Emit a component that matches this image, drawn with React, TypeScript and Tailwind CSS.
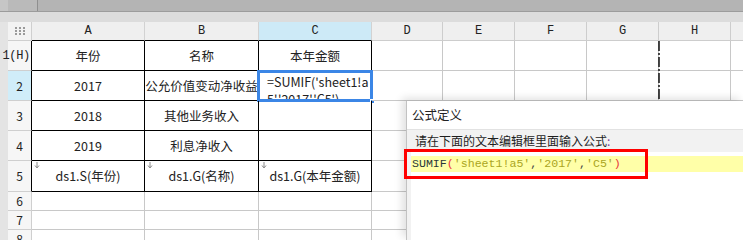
import React from "react";

const cols = ["A", "B", "C", "D", "E", "F", "G", "H", ""];

const rows: { label: string; h: string; cells: string[] }[] = [
  { label: "1(H)", h: "h-[30px]", cells: ["年份", "名称", "本年金额"] },
  { label: "2", h: "h-[30px]", cells: ["2017", "公允价值变动净收益", ""] },
  { label: "3", h: "h-[30px]", cells: ["2018", "其他业务收入", ""] },
  { label: "4", h: "h-[30px]", cells: ["2019", "利息净收入", ""] },
  { label: "5", h: "h-[31px]", cells: ["ds1.S(年份)", "ds1.G(名称)", "ds1.G(本年金额)"] },
  { label: "6", h: "h-[19px]", cells: [] },
  { label: "7", h: "h-[19px]", cells: [] },
  { label: "8", h: "h-[19px]", cells: [] },
];

const colWidths = ["w-[113px]", "w-[114px]", "w-[113px]", "w-[71px]", "w-[72px]", "w-[72px]", "w-[72px]", "w-[72px]", "w-[72px]"];

function DownMark() {
  return (
    <svg className="absolute left-[2px] top-[1px]" width="6" height="7" viewBox="0 0 6 7">
      <path d="M3 0v5M1 3.5L3 6 5 3.5" stroke="#8a8a8a" strokeWidth="1" fill="none" />
    </svg>
  );
}

function CornerIcon() {
  return (
    <svg width="10" height="8" viewBox="0 0 10 8">
      {[0, 1, 2].map((r) =>
        [0, 1, 2].map((c) => <rect key={`${r}${c}`} x={c * 4} y={r * 3} width="2" height="2" fill="#9a9a9a" />)
      )}
    </svg>
  );
}

export default function App() {
  return (
    <div className="relative w-[743px] h-[240px] overflow-hidden bg-white font-['Noto_Sans_CJK_SC',sans-serif] text-[#222]">
      {/* top bars */}
      <div className="flex h-[11px] bg-[#b4b4b4]">
        <div className="w-[8px] bg-[#c6c6c6]" />
        <div className="w-[30px] bg-[#bababa] border-r border-[#8f8f8f]" />
      </div>
      <div className="h-px bg-[#9c9c9c]" />
      <div className="h-[10px] bg-[#dcdcdc]" />

      <div className="flex">
        <div className="w-[8px] shrink-0 bg-[#e4e4e4] self-stretch" />
        <div className="flex flex-col shrink-0">
          {/* column header */}
          <div className="flex h-[19px]">
            <div className="w-[24px] shrink-0 flex items-center justify-center bg-[#f3f3f3] border-r border-b border-[#cfcfcf]">
              <CornerIcon />
            </div>
            {cols.map((c, i) => (
              <div
                key={i}
                className={`${colWidths[i]} shrink-0 flex items-center justify-center font-['Liberation_Mono',monospace] text-[12px] border-r border-b ${
                  i === 2 ? "bg-[#cdeaf7]" : "bg-[#efefef]"
                } ${i < 3 ? "border-r-[#d2d2d2] border-b-black" : "border-[#cdcdcd]"}`}
              >
                {c}
              </div>
            ))}
          </div>

          {rows.map((r, ri) => (
            <div key={ri} className={`flex ${r.h}`}>
              <div
                className={`w-[24px] shrink-0 flex items-center border-r border-b whitespace-nowrap ${
                  ri < 5 ? "border-r-black border-b-[#cfcfcf]" : "border-[#cfcfcf]"
                } ${ri === 1 ? "bg-[#d0edf9]" : "bg-[#f6f6f6]"} ${
                  ri === 0
                    ? "justify-end pr-[1px] font-['Liberation_Mono',monospace] text-[12px] tracking-[-0.3px]"
                    : "justify-center text-[12px]"
                }`}
              >
                {r.label}
              </div>
              {cols.map((_, ci) => {
                const inReport = ri < 5 && ci < 3;
                const text = r.cells[ci] ?? "";
                const selected = ri === 1 && ci === 2;
                return (
                  <div
                    key={ci}
                    className={`${colWidths[ci]} shrink-0 relative flex items-center justify-center border-r border-b text-[12.5px] leading-[16px] whitespace-nowrap ${
                      inReport ? "border-black" : "border-[#c8c8c8]"
                    }`}
                  >
                    {ri === 4 && ci < 3 && <DownMark />}
                    {selected ? (
                      <>
                        <div className="absolute inset-0 overflow-hidden pl-[8px] pt-[2px] text-[12.5px] leading-[17px] whitespace-normal break-all">
                          =SUMIF('sheet1!a5','2017','C5')
                        </div>
                        <div className="absolute -left-[2px] -top-[1px] -right-[2px] -bottom-[2px] border-[3px] border-[#3b86e6]" />
                        <div className="absolute -right-[4px] -bottom-[4px] w-[5px] h-[5px] bg-[#3b86e6] border border-white" />
                      </>
                    ) : (
                      text
                    )}
                  </div>
                );
              })}
            </div>
          ))}
        </div>
      </div>

      {/* page break line */}
      <svg className="absolute left-[658px] top-[41px]" width="2" height="62" viewBox="0 0 2 62">
        <line x1="1" y1="0" x2="1" y2="62" stroke="#111" strokeWidth="1.5" strokeDasharray="10 2 2 2" />
      </svg>

      {/* formula dialog */}
      <div className="absolute left-[406px] top-[101px] right-0 bottom-0 flex flex-col bg-[#f2f2f2] border-l border-[#c2c2c2] shadow-[-4px_-3px_8px_rgba(0,0,0,0.12)]">
        <div className="h-[29px] flex items-center pl-[5px] bg-white border-b border-[#e2e2e2] text-[12.5px]">公式定义</div>
        <div className="h-[22px] flex items-center pl-[8px] text-[12px] text-[#1e1e1e]">
          请在下面的文本编辑框里面输入公式<span className="text-[#7a3e9a]">:</span>
        </div>
        <div className="flex-1 ml-[4px] bg-white pt-[4px]">
          <div className="h-[16px] flex items-center bg-[#ffffa8] pl-[1px] font-['Liberation_Mono',monospace] text-[11.6px] whitespace-pre">
            <span className="text-[#2a3838]">SUMIF</span>
            <span className="text-[#e8333a]">(</span>
            <span className="text-[#aaa522]">'sheet1!a5'</span>
            <span className="text-[#444]">,</span>
            <span className="text-[#aaa522]">'2017'</span>
            <span className="text-[#444]">,</span>
            <span className="text-[#aaa522]">'C5'</span>
            <span className="text-[#e8333a]">)</span>
          </div>
        </div>
      </div>

      {/* red highlight box */}
      <div className="absolute left-[404px] top-[149px] w-[244px] h-[30px] border-[3px] border-[#ff0000]" />
    </div>
  );
}
